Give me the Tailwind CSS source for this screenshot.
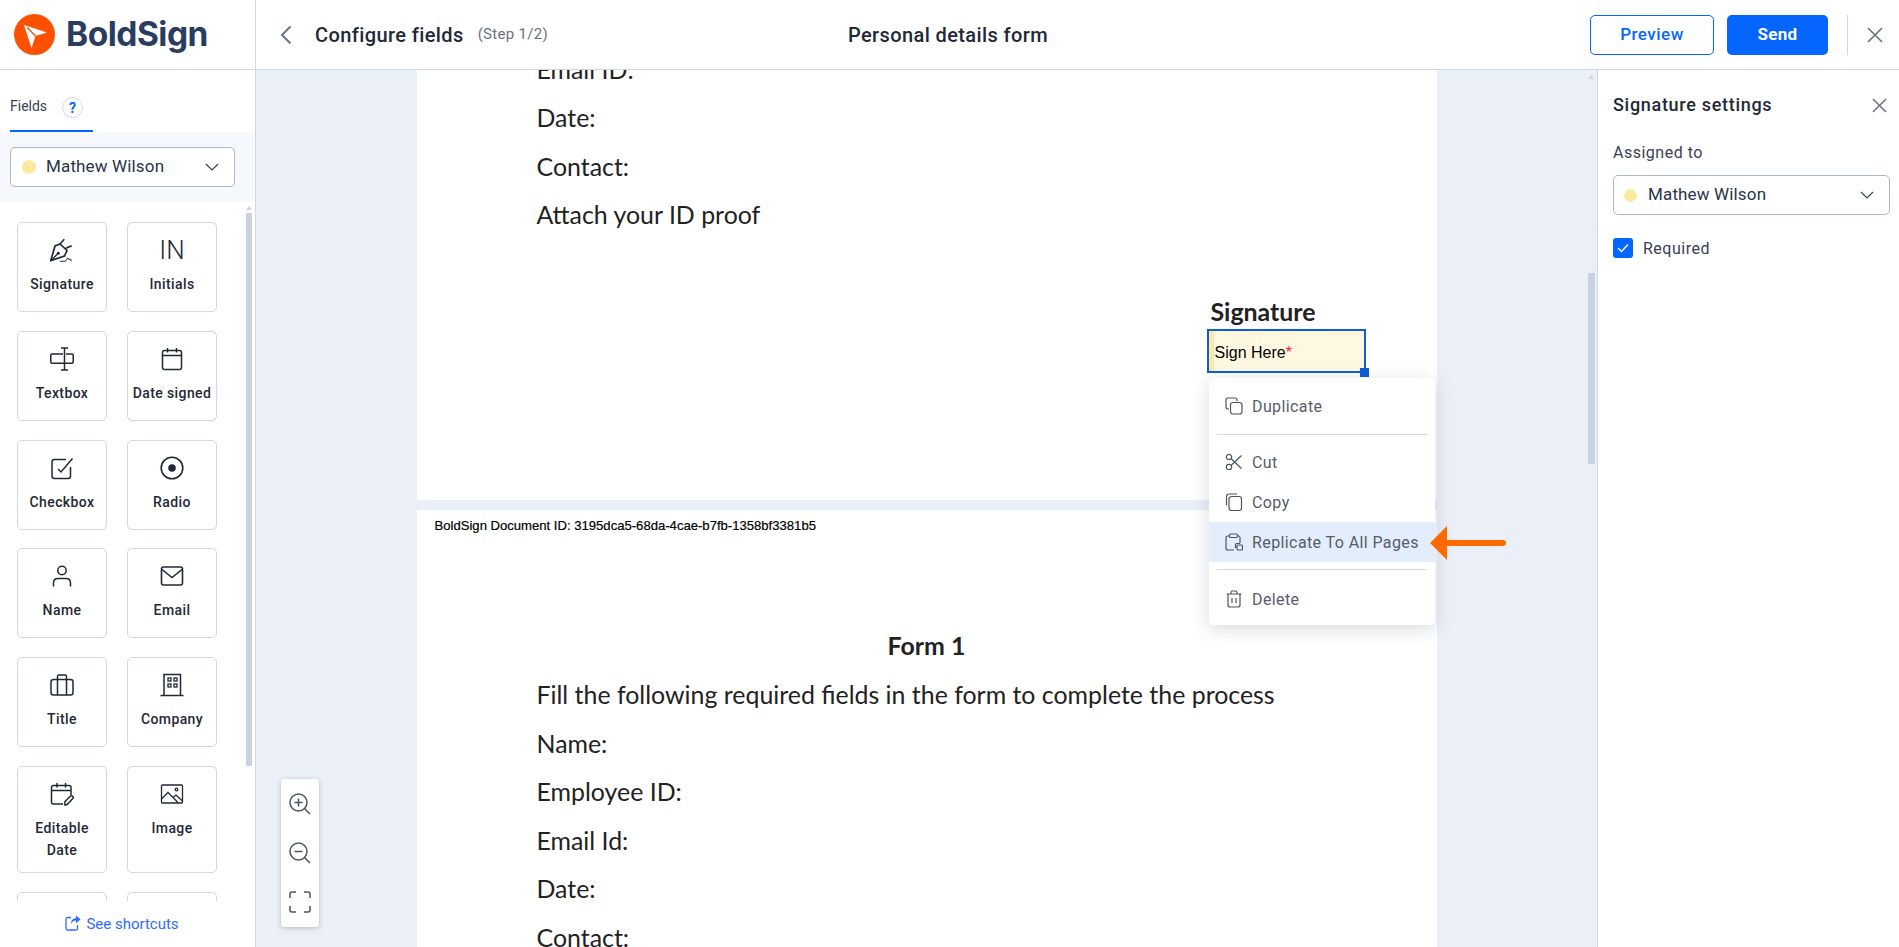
<!DOCTYPE html>
<html lang="en">
  <head>
    <meta charset="UTF-8" />
    <meta name="viewport" content="width=device-width, initial-scale=1.0" />
    <script src="https://cdn.jsdelivr.net/npm/@tailwindcss/browser@4"></script>
    <title>BoldSign - Configure fields</title>
  </head>
  <body class="h-[947px] w-[1899px] overflow-hidden bg-white font-[Roboto,sans-serif] text-[#1f2937]">
    <!-- top bar -->
    <header class="flex h-[70px] border-b border-[#cfd8e3]">
      <div class="flex w-[256px] shrink-0 items-center border-r border-[#cfd8e3] pl-[14px]">
        <svg viewBox="0 0 41 41" class="h-[41px] w-[41px]">
          <circle cx="20.5" cy="20.5" r="20.5" fill="#ff4f00" />
          <path d="M10 11 L33 18.5 L21.5 22 L17.5 34 Z" fill="#fff" />
          <path d="M13 13.5 L21.5 22" stroke="#ff4f00" stroke-width="1.4" />
        </svg>
        <span class="ml-[11px] font-[Inter,sans-serif] text-[33.5px] leading-none font-bold tracking-[-0.5px] text-[#2a3d61]">BoldSign</span>
      </div>
      <div class="relative flex flex-1 items-center">
        <svg viewBox="0 0 12 20" class="ml-[24px] h-[20px] w-[12px]" fill="none" stroke="#64748b" stroke-width="2"><path d="M10.5 1.5 L2 10 L10.5 18.5" /></svg>
        <span class="ml-[23px] text-[20px] font-medium tracking-[0.4px]">Configure fields</span>
        <span class="ml-[14px] text-[15px] tracking-[0.3px] text-[#6b7280]">(Step 1/2)</span>
        <span class="absolute left-[572px] w-[240px] text-center text-[20px] font-medium tracking-[0.4px]">Personal details form</span>
        <div class="ml-auto flex items-center">
          <button class="h-10 w-[124px] rounded-[5px] border border-[#0565ff] text-[17px] font-medium tracking-[0.5px] text-[#0565ff]">Preview</button>
          <button class="ml-[13px] h-10 w-[101px] rounded-[5px] bg-[#0565ff] text-[17px] font-bold tracking-[0.3px] text-white">Send</button>
          <div class="ml-[19px] h-10 w-px bg-[#cfd8e3]"></div>
          <svg viewBox="0 0 16 16" class="mr-4 ml-[19px] h-4 w-4" fill="none" stroke="#6b7280" stroke-width="1.7"><path d="M1 1 L15 15 M15 1 L1 15" /></svg>
        </div>
      </div>
    </header>

    <div class="flex h-[877px]">
      <!-- fields sidebar -->
      <aside class="relative flex w-[256px] shrink-0 flex-col border-r border-[#cfd8e3]">
        <div class="flex h-[62px] shrink-0 items-end pl-[10px]">
          <div class="flex h-[62px] w-[83px] items-start border-b-2 border-[#0565ff] pt-[27px] text-[14px]">
            <span class="-mt-px leading-[20px] text-[#374151]">Fields</span>
            <span class="ml-[15px] flex h-[21px] w-[21px] items-center justify-center rounded-full border border-[#cfd8e3] text-[14px] leading-none font-bold text-[#0565ff]">?</span>
          </div>
        </div>
        <div class="h-[70px] shrink-0 bg-[#f5f8fc] pt-[15px] pl-[10px]">
          <div class="flex h-10 w-[225px] items-center rounded-[5px] border border-[#aeb8c7] bg-white pl-[11px] text-[17px] tracking-[0.15px]">
            <span class="h-[14px] w-[14px] rounded-full bg-[#fbe9a0]"></span>
            <span class="ml-[10px] text-[#283447]">Mathew Wilson</span>
            <svg viewBox="0 0 14 8" class="mr-[15px] ml-auto h-2 w-[14px]" fill="none" stroke="#374151" stroke-width="1.2"><path d="M1 1 L7 7 L13 1" /></svg>
          </div>
        </div>
        <div class="flex-1 overflow-hidden pt-5 pl-[17px]">
          <div class="grid w-[200px] grid-cols-[90px_90px] gap-x-5 gap-y-[18.75px] text-center text-[14px] leading-[22px] font-medium tracking-[0.4px]">
            <div class="h-[90px] rounded-[5px] border border-[#cfd8e3] pt-[15px]">
              <svg viewBox="0 0 24 24" class="mx-auto h-6 w-6" fill="none" stroke="#1f2937" stroke-width="1.7">
                <path d="M0.8 22.5 L5 8 L10 6 L17 12.5 L14.5 18 Z" />
                <path d="M1 22.5 L7.5 16" stroke-width="1.3" /><circle cx="8.3" cy="15.3" r="1.5" fill="#1f2937" stroke="none" />
                <path d="M10 6 L14.3 1.3 M16 10.3 L21.7 7.7" />
                <path d="M10 23.3 H15 M15 23.3 C16.5 23.3 17 19.5 18 19.8 C19 20.2 18.8 23.3 19.6 21.5 C20.2 20.2 20.8 20.5 21.2 23.3" stroke-width="1" />
              </svg>
              <div class="mt-[11px]">Signature</div>
            </div>
            <div class="h-[90px] rounded-[5px] border border-[#cfd8e3] pt-[15px]">
              <div class="h-6 text-[26px] leading-[24px] font-light tracking-normal">IN</div>
              <div class="mt-[11px]">Initials</div>
            </div>
            <div class="h-[90px] rounded-[5px] border border-[#cfd8e3] pt-[15px]">
              <svg viewBox="0 0 24 24" class="mx-auto h-6 w-6" fill="none" stroke="#1f2937" stroke-width="1.5">
                <path d="M13 7 H2 Q0.8 7 0.8 8.2 V15 Q0.8 16.2 2 16.2 H23 M16 7 H22 Q23.2 7 23.2 8.2 V15 Q23.2 16.2 22 16.2" />
                <path d="M14.5 1 V23 M11 1 H18 M11 23 H18" />
              </svg>
              <div class="mt-[11px]">Textbox</div>
            </div>
            <div class="h-[90px] rounded-[5px] border border-[#cfd8e3] pt-[15px]">
              <svg viewBox="0 0 24 24" class="mx-auto h-6 w-6" fill="none" stroke="#1f2937" stroke-width="1.5">
                <rect x="2.5" y="3.5" width="19" height="19" rx="2" /><path d="M2.5 8.5 H21.5 M7.5 1 V5.5 M16.5 1 V5.5" />
              </svg>
              <div class="mt-[11px]">Date signed</div>
            </div>
            <div class="h-[90px] rounded-[5px] border border-[#cfd8e3] pt-[15px]">
              <svg viewBox="0 0 24 24" class="mx-auto h-6 w-6" fill="none" stroke="#1f2937" stroke-width="1.5">
                <path d="M20.5 11 V20 Q20.5 22.5 18 22.5 H4.5 Q2 22.5 2 20 V6 Q2 3.5 4.5 3.5 H16" /><path d="M8 12 L11 15 L22.5 1.5" transform="translate(0 1)" />
              </svg>
              <div class="mt-[11px]">Checkbox</div>
            </div>
            <div class="h-[90px] rounded-[5px] border border-[#cfd8e3] pt-[15px]">
              <svg viewBox="0 0 24 24" class="mx-auto h-6 w-6" fill="none" stroke="#1f2937" stroke-width="1.6">
                <circle cx="12" cy="12" r="10.8" /><circle cx="12" cy="12" r="3.8" fill="#1f2937" stroke="none" />
              </svg>
              <div class="mt-[11px]">Radio</div>
            </div>
            <div class="h-[90px] rounded-[5px] border border-[#cfd8e3] pt-[15px]">
              <svg viewBox="0 0 24 24" class="mx-auto h-6 w-6" fill="none" stroke="#1f2937" stroke-width="1.5">
                <circle cx="12" cy="6.5" r="4.2" /><path d="M3.5 22.5 V19 Q3.5 14.5 8 14.5 H16 Q20.5 14.5 20.5 19 V22.5" />
              </svg>
              <div class="mt-[11px]">Name</div>
            </div>
            <div class="h-[90px] rounded-[5px] border border-[#cfd8e3] pt-[15px]">
              <svg viewBox="0 0 24 24" class="mx-auto h-6 w-6" fill="none" stroke="#1f2937" stroke-width="1.6">
                <rect x="1.5" y="3" width="21" height="18" rx="2" /><path d="M2 5.5 L12 13.5 L22 5.5" />
              </svg>
              <div class="mt-[11px]">Email</div>
            </div>
            <div class="h-[90px] rounded-[5px] border border-[#cfd8e3] pt-[15px]">
              <svg viewBox="0 0 24 24" class="mx-auto h-6 w-6" fill="none" stroke="#1f2937" stroke-width="1.5">
                <rect x="1" y="6.5" width="22" height="15.5" rx="2.5" /><path d="M7.5 6.5 V3.5 Q7.5 2 9 2 H15 Q16.5 2 16.5 3.5 V6.5 M7.5 6.5 V22 M16.5 6.5 V22" />
              </svg>
              <div class="mt-[11px]">Title</div>
            </div>
            <div class="h-[90px] rounded-[5px] border border-[#cfd8e3] pt-[15px]">
              <svg viewBox="0 0 24 24" class="mx-auto h-6 w-6" fill="none" stroke="#1f2937" stroke-width="1.3">
                <path d="M4 22.5 V1.5 H20.5 V22.5 M0.5 22.5 H23.5" stroke-width="1.5" />
                <rect x="8" y="5" width="3" height="3" /><rect x="14" y="5" width="3" height="3" /><rect x="8" y="11" width="3" height="3" /><rect x="14" y="11" width="3" height="3" />
              </svg>
              <div class="mt-[11px]">Company</div>
            </div>
            <div class="h-[107.5px] rounded-[5px] border border-[#cfd8e3] px-3 pt-[15px]">
              <svg viewBox="0 0 24 24" class="mx-auto h-6 w-6" fill="none" stroke="#1f2937" stroke-width="1.5">
                <path d="M13 22 H3.5 Q1.5 22 1.5 20 V5.5 Q1.5 3.5 3.5 3.5 H19 Q21 3.5 21 5.5 V13" /><path d="M1.5 8.5 H21 M7 1 V5.5 M15.5 1 V5.5" />
                <path d="M15 23 L14.8 19.8 L20.5 14 Q21.5 13.2 22.7 14.3 Q23.7 15.5 22.8 16.5 L17.2 22.6 Z" />
              </svg>
              <div class="mt-[11px]">Editable Date</div>
            </div>
            <div class="h-[107.5px] rounded-[5px] border border-[#cfd8e3] pt-[15px]">
              <svg viewBox="0 0 24 24" class="mx-auto h-6 w-6" fill="none" stroke="#1f2937" stroke-width="1.3">
                <rect x="1.5" y="3" width="21" height="18" rx="1" /><path d="M1.5 17 L8 10.5 L18 20.5 M13 15.5 L16 13 L22.5 19" /><circle cx="16.5" cy="7.5" r="1.3" />
              </svg>
              <div class="mt-[11px]">Image</div>
            </div>
            <div class="h-[90px] rounded-[5px] border border-[#cfd8e3]"></div>
            <div class="h-[90px] rounded-[5px] border border-[#cfd8e3]"></div>
          </div>
        </div>
        <div class="flex h-[46px] shrink-0 items-center justify-center pr-[11px] text-[15px] text-[#2f6bff]">
          <svg viewBox="0 0 16 16" class="mb-[3px] h-4 w-4" fill="none" stroke="#2f6bff" stroke-width="1.3">
            <path d="M6 2.5 H2.5 Q1 2.5 1 4 V13.5 Q1 15 2.5 15 H11 Q12.5 15 12.5 13.5 V10" />
            <path d="M6 10 Q6.5 5.5 11 5.5 V8.5 L15.5 4.2 L11 0.5 V3 Q5.5 3.5 6 10 Z" fill="#2f6bff" stroke="none" />
          </svg>
          <span class="ml-[5px]">See shortcuts</span>
        </div>
        <!-- list scrollbar -->
        <div class="absolute top-[136px] left-[246px] h-0 w-0 border-x-[3px] border-b-[4px] border-x-transparent border-b-[#cbd5df]"></div>
        <div class="absolute top-[143px] left-[246px] h-[553px] w-[6px] bg-[#c8d3df]"></div>
      </aside>

      <!-- document -->
      <main class="relative flex-1 overflow-hidden bg-[#ebf0f8]">
        <div class="mx-auto flex h-full w-[1020px] flex-col font-[Lato,sans-serif] text-[24.9px] text-[#222]">
          <section class="h-[430px] shrink-0 overflow-hidden bg-white pl-[120px]">
            <div class="-mt-[25px] flex h-[48.5px] items-center">Email ID:</div>
            <div class="flex h-[48.5px] items-center">Date:</div>
            <div class="flex h-[48.5px] items-center">Contact:</div>
            <div class="flex h-[48.5px] items-center">Attach your ID proof</div>
            <div class="mt-[56px] ml-[674px] h-8 leading-8 font-bold">Signature</div>
            <div class="relative mt-[2px] h-[44px] w-[159px] translate-x-[670px] border-2 border-[#0b5ed7] bg-[#fff8e1] font-['Liberation_Sans',sans-serif] text-[16px] leading-[44px] text-black">
              <div class="flex h-full border-l-[5px] border-[#fbe9a8] pl-[1px]">Sign Here<span class="text-[#ff1744]">*</span></div>
              <span class="absolute -right-[5px] -bottom-[6px] h-[9px] w-[9px] bg-[#0b5ed7]"></span>
            </div>
          </section>
          <section class="mt-[10px] flex-1 overflow-hidden bg-white">
            <div class="flex h-8 items-center pl-[18px] font-['Liberation_Sans',sans-serif] text-[13.1px] text-black [-webkit-text-stroke:0.2px_black]">BoldSign Document ID: 3195dca5-68da-4cae-b7fb-1358bf3381b5</div>
            <div class="mt-[79px] flex h-[48.5px] items-center justify-center font-bold">Form 1</div>
            <div class="mt-px pl-[120px]">
              <div class="flex h-[48.5px] items-center">Fill the following required fields in the form to complete the process</div>
              <div class="flex h-[48.5px] items-center">Name:</div>
              <div class="flex h-[48.5px] items-center">Employee ID:</div>
              <div class="flex h-[48.5px] items-center">Email Id:</div>
              <div class="flex h-[48.5px] items-center">Date:</div>
              <div class="flex h-[48.5px] items-center">Contact:</div>
            </div>
          </section>
        </div>

        <!-- document scrollbar -->
        <div class="absolute top-[5px] left-[1332px] h-0 w-0 border-x-[3px] border-b-[4px] border-x-transparent border-b-[#cbd5df]"></div>
        <div class="absolute top-[203px] left-[1332px] h-[191px] w-[7px] bg-[#c8d3df]"></div>

        <!-- context menu -->
        <div class="absolute top-[308px] left-[953px] h-[247px] w-[226px] rounded-[5px] bg-white pt-2 text-[16px] tracking-[0.4px] text-[#555d6b] shadow-[0_4px_18px_rgba(71,85,105,0.22)]">
          <div class="flex h-10 items-center pl-[16px]">
            <svg viewBox="0 0 18 18" class="h-[18px] w-[18px]" fill="none" stroke="#4b5563" stroke-width="1.2"><path d="M4 12 H3 Q1 12 1 10 V3 Q1 1 3 1 H10 Q12 1 12 3 V4" /><rect x="5.5" y="5.5" width="11.5" height="11.5" rx="2.5" /></svg>
            <span class="mt-[2px] ml-[9px]">Duplicate</span>
          </div>
          <div class="mx-2 mt-2 mb-[7px] h-px bg-[#d4d8df]"></div>
          <div class="flex h-10 items-center pl-[16px]">
            <svg viewBox="0 0 18 18" class="h-[18px] w-[18px]" fill="none" stroke="#4b5563" stroke-width="1.2"><circle cx="4" cy="4" r="2.7" /><circle cx="4" cy="14" r="2.7" /><path d="M6 5.5 L16.5 15.5 M6 12.5 L16.5 2.5" /></svg>
            <span class="mt-[2px] ml-[9px]">Cut</span>
          </div>
          <div class="flex h-10 items-center pl-[16px]">
            <svg viewBox="0 0 18 18" class="h-[18px] w-[18px]" fill="none" stroke="#4b5563" stroke-width="1.2"><path d="M1.5 12.5 V3.5 Q1.5 1 4 1 H12" /><rect x="4" y="3.5" width="12.5" height="14" rx="2.5" /></svg>
            <span class="mt-[2px] ml-[9px]">Copy</span>
          </div>
          <div class="flex h-10 items-center bg-[#e3edfb] pl-[16px]">
            <svg viewBox="0 0 18 18" class="h-[18px] w-[18px]" fill="none" stroke="#4b5563" stroke-width="1.2"><path d="M4.5 3 H3 Q1 3 1 5 V15 Q1 17 3 17 H9 M12.5 3 H14 Q15 3 15 5 V10" /><rect x="4.5" y="1" width="8" height="3.5" rx="1.2" /><rect x="12" y="12" width="5.5" height="5" rx="1" /><path d="M10.5 15 V11.5 Q10.5 10.5 11.5 10.5 H15" /></svg>
            <span class="mt-[2px] ml-[9px]">Replicate To All Pages</span>
          </div>
          <div class="mx-2 mt-[7px] mb-[9px] h-px bg-[#d4d8df]"></div>
          <div class="flex h-10 items-center pl-[16px]">
            <svg viewBox="0 0 18 18" class="h-[18px] w-[18px]" fill="none" stroke="#4b5563" stroke-width="1.2"><path d="M1.5 4 H16.5 M6 4 V2.5 Q6 1 7.5 1 H10.5 Q12 1 12 2.5 V4" /><path d="M3 4 V15 Q3 17 5 17 H13 Q15 17 15 15 V4 M7 8 V13 M11 8 V13" /></svg>
            <span class="mt-[1px] ml-[9px]">Delete</span>
          </div>
        </div>

        <!-- callout arrow -->
        <svg viewBox="0 0 76 34" class="absolute top-[456px] left-[1174px] h-[34px] w-[76px]">
          <path d="M0 17 L17 0 V14 H73 Q76 14 76 17 Q76 20 73 20 H17 V34 Z" fill="#ff6a00" />
        </svg>

        <!-- zoom controls -->
        <div class="absolute top-[709px] left-[25px] flex h-[148px] w-[38px] flex-col items-center justify-between rounded-[4px] bg-white py-[14px] shadow-[0_1px_5px_rgba(71,85,105,0.35)]">
          <svg viewBox="0 0 22 22" class="h-[22px] w-[22px]" fill="none" stroke="#4b5563" stroke-width="1.5"><circle cx="9.5" cy="9.5" r="8.5" /><path d="M15.5 15.5 L21 21 M9.5 5.5 V13.5 M5.5 9.5 H13.5" /></svg>
          <svg viewBox="0 0 22 22" class="h-[22px] w-[22px]" fill="none" stroke="#4b5563" stroke-width="1.5"><circle cx="9.5" cy="9.5" r="8.5" /><path d="M15.5 15.5 L21 21 M5.5 9.5 H13.5" /></svg>
          <svg viewBox="0 0 22 22" class="h-[22px] w-[22px]" fill="none" stroke="#4b5563" stroke-width="1.5"><path d="M1 7 V3 Q1 1 3 1 H7 M15 1 H19 Q21 1 21 3 V7 M21 15 V19 Q21 21 19 21 H15 M7 21 H3 Q1 21 1 19 V15" /></svg>
        </div>
      </main>

      <!-- settings panel -->
      <aside class="w-[302px] shrink-0 border-l border-[#cfd8e3] pl-[15px]">
        <div class="flex items-center pt-6 pr-3">
          <span class="text-[18px] leading-[22px] font-medium tracking-[0.7px]">Signature settings</span>
          <svg viewBox="0 0 16 16" class="ml-auto h-[15px] w-[15px]" fill="none" stroke="#6b7280" stroke-width="1.6"><path d="M1 1 L15 15 M15 1 L1 15" /></svg>
        </div>
        <div class="mt-[27px] text-[16px] leading-[20px] tracking-[0.5px] text-[#374151]">Assigned to</div>
        <div class="mt-[12px] flex h-10 w-[277px] items-center rounded-[5px] border border-[#aeb8c7] pl-[10px] text-[17px] tracking-[0.15px]">
          <span class="h-[13px] w-[13px] rounded-full bg-[#fbe9a0]"></span>
          <span class="ml-[11px] text-[#283447]">Mathew Wilson</span>
          <svg viewBox="0 0 14 8" class="mr-[15px] ml-auto h-2 w-[14px]" fill="none" stroke="#374151" stroke-width="1.2"><path d="M1 1 L7 7 L13 1" /></svg>
        </div>
        <div class="mt-[22px] flex items-center">
          <span class="flex h-5 w-5 items-center justify-center rounded-[3px] bg-[#0565ff]">
            <svg viewBox="0 0 12 10" class="h-[10px] w-3" fill="none" stroke="#fff" stroke-width="1.5"><path d="M1 5 L4.5 8.5 L11 1.5" /></svg>
          </span>
          <span class="mt-[2px] ml-[10px] text-[16px] leading-[20px] tracking-[0.5px] text-[#374151]">Required</span>
        </div>
      </aside>
    </div>
  </body>
</html>
